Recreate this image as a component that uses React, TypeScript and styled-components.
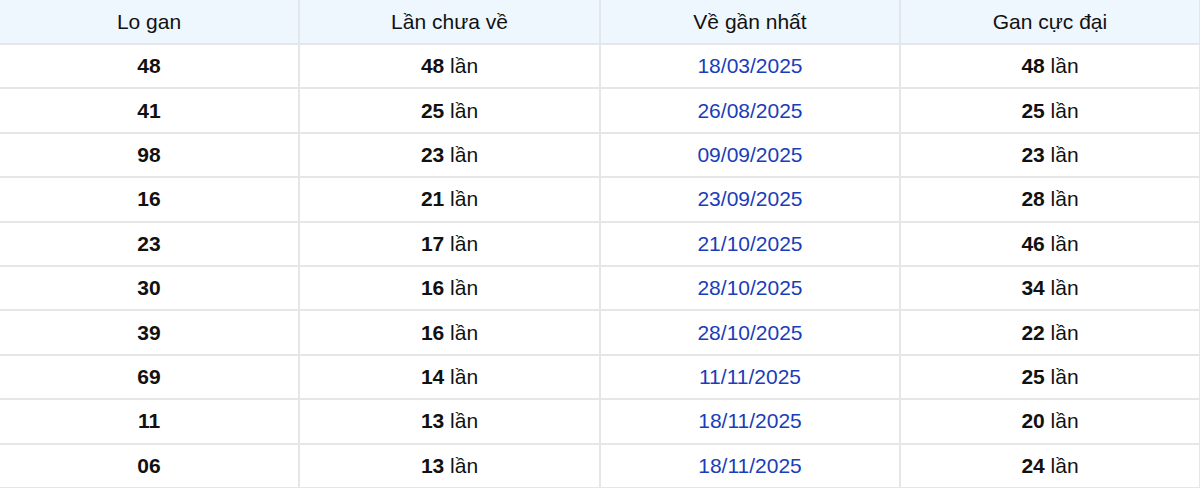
import React from "react";
import styled, { createGlobalStyle } from "styled-components";

interface GanRow {
  lo: string;
  missed: number;
  lastDate: string;
  maxGan: number;
}

const rows: GanRow[] = [
  { lo: "48", missed: 48, lastDate: "18/03/2025", maxGan: 48 },
  { lo: "41", missed: 25, lastDate: "26/08/2025", maxGan: 25 },
  { lo: "98", missed: 23, lastDate: "09/09/2025", maxGan: 23 },
  { lo: "16", missed: 21, lastDate: "23/09/2025", maxGan: 28 },
  { lo: "23", missed: 17, lastDate: "21/10/2025", maxGan: 46 },
  { lo: "30", missed: 16, lastDate: "28/10/2025", maxGan: 34 },
  { lo: "39", missed: 16, lastDate: "28/10/2025", maxGan: 22 },
  { lo: "69", missed: 14, lastDate: "11/11/2025", maxGan: 25 },
  { lo: "11", missed: 13, lastDate: "18/11/2025", maxGan: 20 },
  { lo: "06", missed: 13, lastDate: "18/11/2025", maxGan: 24 },
];

const GlobalStyle = createGlobalStyle`
  body {
    margin: 0;
    background: #ffffff;
    font-family: "Liberation Sans", Arial, sans-serif;
  }
`;

const Table = styled.table`
  width: 1200px;
  border-collapse: collapse;
  table-layout: fixed;
  color: #111;
  font-size: 21px;
`;

const HeadCell = styled.th`
  height: 43px;
  padding: 0;
  background: #eef6fe;
  font-weight: 400;
  text-align: center;
  border-right: 2px solid #e3e6ea;
  border-bottom: 2px solid #e3e6ea;
`;

const Row = styled.tr`
  height: 44.4px;
`;

const Cell = styled.td<{ $blue?: boolean; $bold?: boolean }>`
  padding: 0;
  text-align: center;
  color: ${(p) => (p.$blue ? "#1a3db9" : "#111")};
  font-weight: ${(p) => (p.$bold ? 700 : 400)};
  border-right: 2px solid #e6e6e6;
  border-bottom: 2px solid #e6e6e6;
`;

const Count = styled.b`
  font-weight: 700;
`;

const App: React.FC = () => {
  return (
    <>
      <GlobalStyle />
      <Table>
        <colgroup>
          <col style={{ width: 299 }} />
          <col style={{ width: 301 }} />
          <col style={{ width: 300 }} />
          <col style={{ width: 300 }} />
        </colgroup>
        <thead>
          <tr>
            <HeadCell>Lo gan</HeadCell>
            <HeadCell>Lần chưa về</HeadCell>
            <HeadCell>Về gần nhất</HeadCell>
            <HeadCell>Gan cực đại</HeadCell>
          </tr>
        </thead>
        <tbody>
          {rows.map((r) => (
            <Row key={r.lo}>
              <Cell $bold>{r.lo}</Cell>
              <Cell>
                <Count>{r.missed}</Count> lần
              </Cell>
              <Cell $blue>{r.lastDate}</Cell>
              <Cell>
                <Count>{r.maxGan}</Count> lần
              </Cell>
            </Row>
          ))}
        </tbody>
      </Table>
    </>
  );
};

export default App;
